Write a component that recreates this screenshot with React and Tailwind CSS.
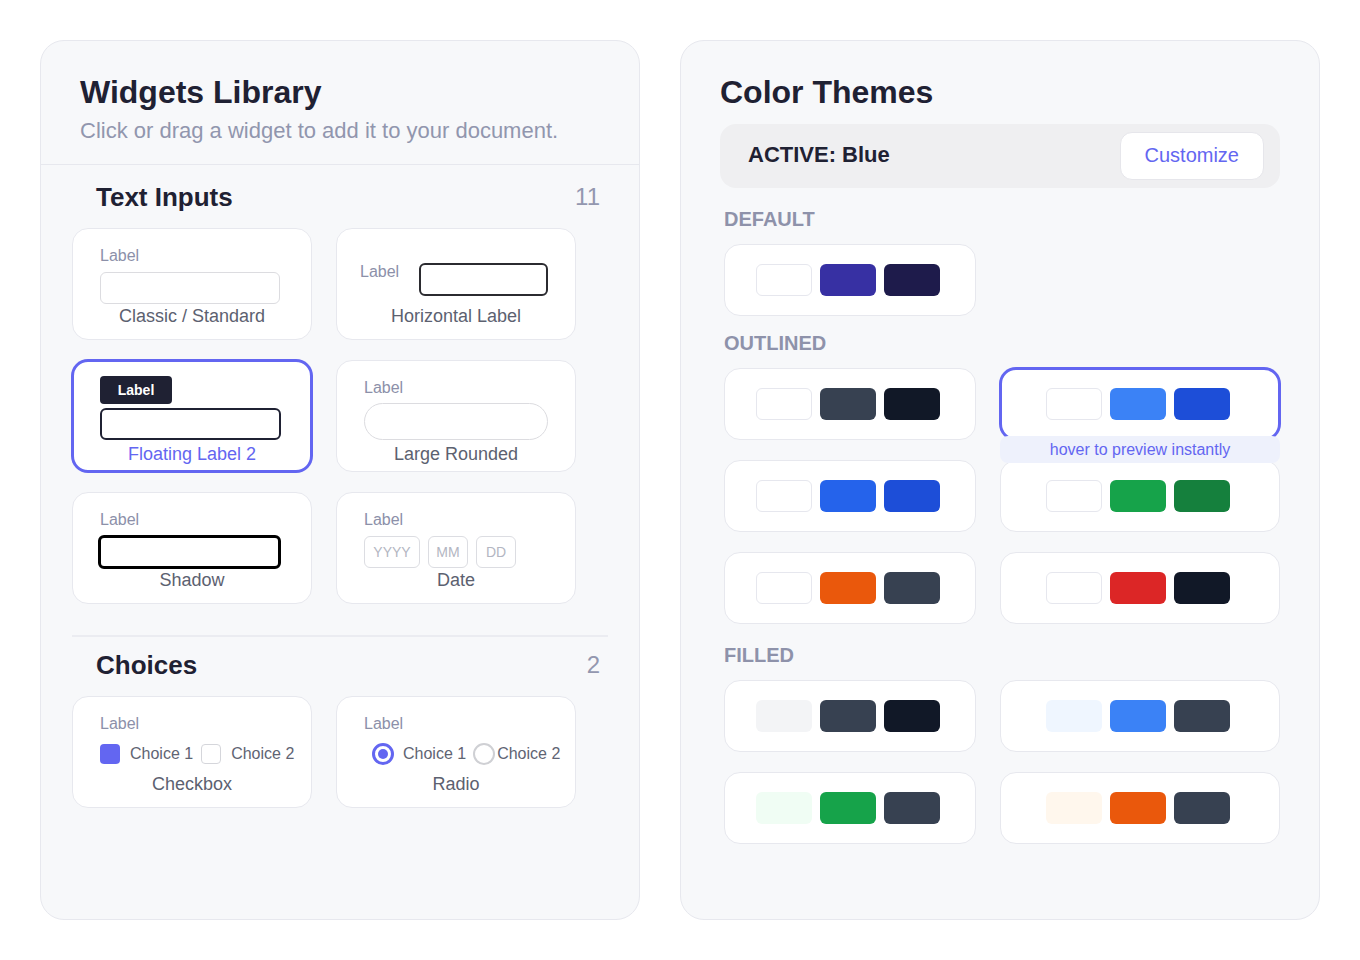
import React from 'react';

const muted = 'text-[#8c90a9]';

function Card({ selected, children, className = '' }) {
    return (
        <div
            className={`h-[112px] rounded-2xl bg-white flex flex-col ${
                selected ? 'border-2 border-[#6366f1] shadow-[0_0_0_1px_#6366f1]' : 'border border-[#e7e8ee]'
            } ${className}`}
        >
            {children}
        </div>
    );
}

function Caption({ children, blue }) {
    return (
        <div className={`text-center text-[18px] leading-6 ${blue ? 'text-[#6366f1]' : 'text-[#5c6170]'}`}>{children}</div>
    );
}

function Label({ children }) {
    return <div className={`text-[16px] leading-6 ${muted}`}>{children}</div>;
}

function Swatches({ colors, outlined }) {
    return (
        <div className="flex gap-2">
            {colors.map((c, i) => (
                <div
                    key={i}
                    className={`w-14 h-8 rounded-md ${c} ${i === 0 && outlined ? 'border border-[#e6e7ee]' : ''}`}
                />
            ))}
        </div>
    );
}

function ThemeCard({ colors, outlined, selected }) {
    return (
        <div
            className={`relative h-[72px] rounded-2xl bg-white flex items-center justify-center pr-1 ${
                selected ? 'border-2 border-[#6366f1] shadow-[0_0_0_1px_#6366f1]' : 'border border-[#e7e8ee]'
            }`}
        >
            <Swatches colors={colors} outlined={outlined} />
            {selected && (
                <div className="absolute z-10 left-[-2px] right-[-2px] top-[66px] h-[27px] rounded-lg bg-[#eef1fc] flex items-center justify-center text-[16px] text-[#6366f1]">
                    hover to preview instantly
                </div>
            )}
        </div>
    );
}

function SectionHead({ title, count }) {
    return (
        <div className="flex items-center justify-between pl-6 pr-2">
            <h2 className="text-[26px] leading-8 font-bold text-[#1f2133]">{title}</h2>
            <span className="text-[24px] leading-8 text-[#9397af]">{count}</span>
        </div>
    );
}

const outlined = [
    ['bg-white', 'bg-[#374151]', 'bg-[#111827]'],
    ['bg-white', 'bg-[#3b82f6]', 'bg-[#1d4ed8]'],
    ['bg-white', 'bg-[#2563eb]', 'bg-[#1d4ed8]'],
    ['bg-white', 'bg-[#16a34a]', 'bg-[#15803d]'],
    ['bg-white', 'bg-[#ea580c]', 'bg-[#374151]'],
    ['bg-white', 'bg-[#dc2626]', 'bg-[#111827]'],
];

const filled = [
    ['bg-[#f3f4f6]', 'bg-[#374151]', 'bg-[#111827]'],
    ['bg-[#eff6ff]', 'bg-[#3b82f6]', 'bg-[#374151]'],
    ['bg-[#f0fdf4]', 'bg-[#16a34a]', 'bg-[#374151]'],
    ['bg-[#fff7ed]', 'bg-[#ea580c]', 'bg-[#374151]'],
];

export default function App() {
    return (
        <div className="w-[1360px] h-[960px] bg-white p-10 flex gap-10 font-['Liberation_Sans',Arial,sans-serif]">
            {/* Widgets library */}
            <div className="w-[600px] h-[880px] rounded-3xl border border-[#e7e8ee] bg-[#f7f8fa] overflow-hidden">
                <div className="px-[39px] pt-[31px] pb-[19px] border-b border-[#e7e8ee]">
                    <h1 className="text-[32px] leading-10 font-bold text-[#1f2133]">Widgets Library</h1>
                    <p className="mt-[5px] text-[22px] leading-7 text-[#9196ae]">Click or drag a widget to add it to your document.</p>
                </div>

                <div className="pl-[31px] w-[567px]">
                    <div className="mt-4">
                        <SectionHead title="Text Inputs" count="11" />
                    </div>
                    <div className="mt-[15px] grid grid-cols-[240px_240px] gap-x-6 gap-y-5">
                        <Card className="pt-[15px] px-[27px]">
                            <div className="h-[60px]">
                                <Label>Label</Label>
                                <div className="mt-1 h-8 w-[180px] rounded-md border border-[#dcdce0]" />
                            </div>
                            <Caption>Classic / Standard</Caption>
                        </Card>
                        <Card className="pt-[15px] px-[23px]">
                            <div className="h-[60px] flex items-start">
                                <div className="mt-4"><Label>Label</Label></div>
                                <div className="ml-5 mt-[19px] h-[33px] w-[129px] rounded-md border-2 border-[#2b2b30]" />
                            </div>
                            <Caption>Horizontal Label</Caption>
                        </Card>
                        <Card selected className="pt-[14px] pl-[26px] pr-[26px]">
                            <div className="h-[66px]">
                                <div className="w-[72px] h-7 rounded bg-[#1f2133] flex items-center justify-center text-[14px] font-bold text-white">Label</div>
                                <div className="mt-1 h-8 w-[181px] rounded-md border-2 border-[#1f2133]" />
                            </div>
                            <Caption blue>Floating Label 2</Caption>
                        </Card>
                        <Card className="pt-[15px] px-[27px]">
                            <div className="h-[66px]">
                                <Label>Label</Label>
                                <div className="mt-[3px] h-[37px] w-[184px] rounded-full border border-[#dcdce0]" />
                            </div>
                            <Caption>Large Rounded</Caption>
                        </Card>
                        <Card className="pt-[15px] px-[27px]">
                            <div className="h-[60px]">
                                <Label>Label</Label>
                                <div className="mt-[3px] ml-[-2px] h-[34px] w-[183px] rounded-md border-[3px] border-black" />
                            </div>
                            <Caption>Shadow</Caption>
                        </Card>
                        <Card className="pt-[15px] px-[27px]">
                            <div className="h-[60px]">
                                <Label>Label</Label>
                                <div className="mt-1 flex gap-2 text-[14px] text-[#b3b6c2]">
                                    <div className="w-14 h-8 rounded-md border border-[#dcdde2] flex items-center justify-center">YYYY</div>
                                    <div className="w-10 h-8 rounded-md border border-[#dcdde2] flex items-center justify-center">MM</div>
                                    <div className="w-10 h-8 rounded-md border border-[#dcdde2] flex items-center justify-center">DD</div>
                                </div>
                            </div>
                            <Caption>Date</Caption>
                        </Card>
                    </div>

                    <div className="mt-[31px] h-[2px] bg-[#ebecf1]" />

                    <div className="mt-3">
                        <SectionHead title="Choices" count="2" />
                    </div>
                    <div className="mt-[15px] grid grid-cols-[240px_240px] gap-x-6">
                        <Card className="pt-[15px] px-[27px]">
                            <div className="h-[60px]">
                                <Label>Label</Label>
                                <div className="mt-1 h-7 flex items-center text-[16px] text-[#5f6473] whitespace-nowrap">
                                    <span className="w-5 h-5 shrink-0 rounded bg-[#6366f1]" />
                                    <span className="ml-2.5">Choice 1</span>
                                    <span className="ml-2 w-5 h-5 shrink-0 rounded border-[1.5px] border-[#d5d6db] bg-white" />
                                    <span className="ml-2.5">Choice 2</span>
                                </div>
                            </div>
                            <Caption>Checkbox</Caption>
                        </Card>
                        <Card className="pt-[15px] px-[27px]">
                            <div className="h-[60px]">
                                <Label>Label</Label>
                                <div className="mt-1 h-7 pl-2 flex items-center text-[16px] text-[#5f6473] whitespace-nowrap">
                                    <span className="w-[22px] h-[22px] shrink-0 rounded-full border-[3px] border-[#6366f1] flex items-center justify-center">
                                        <span className="w-2.5 h-2.5 rounded-full bg-[#6366f1]" />
                                    </span>
                                    <span className="ml-[9px]">Choice 1</span>
                                    <span className="ml-[7px] w-[22px] h-[22px] shrink-0 rounded-full border-2 border-[#cfd0d4]" />
                                    <span className="ml-[2px]">Choice 2</span>
                                </div>
                            </div>
                            <Caption>Radio</Caption>
                        </Card>
                    </div>
                </div>
            </div>

            {/* Color themes */}
            <div className="w-[640px] h-[880px] rounded-3xl border border-[#e7e8ee] bg-[#f7f8fa] px-[39px] pt-[31px]">
                <h1 className="text-[32px] leading-10 font-bold text-[#1f2133]">Color Themes</h1>
                <div className="mt-3 h-16 rounded-2xl bg-[#efeff1] flex items-center justify-between pl-7 pr-4">
                    <span className="mb-1 text-[22px] font-bold text-[#1f2133]">ACTIVE: Blue</span>
                    <button className="h-12 px-6 rounded-xl bg-white border border-[#e6e6eb] text-[20px] leading-6 pb-0.5 text-[#6366f1]">Customize</button>
                </div>

                <div className="pl-1">
                    <div className="mt-[19px] text-[20px] leading-6 font-bold text-[#8e92aa]">DEFAULT</div>
                    <div className="mt-[13px] grid grid-cols-[252px_280px] gap-x-6">
                        <ThemeCard outlined colors={['bg-white', 'bg-[#3730a3]', 'bg-[#1e1b4b]']} />
                    </div>

                    <div className="mt-[15px] text-[20px] leading-6 font-bold text-[#8e92aa]">OUTLINED</div>
                    <div className="mt-[13px] grid grid-cols-[252px_280px] gap-x-6 gap-y-5">
                        {outlined.map((c, i) => (
                            <ThemeCard key={i} outlined colors={c} selected={i === 1} />
                        ))}
                    </div>

                    <div className="mt-[19px] text-[20px] leading-6 font-bold text-[#8e92aa]">FILLED</div>
                    <div className="mt-[13px] grid grid-cols-[252px_280px] gap-x-6 gap-y-5">
                        {filled.map((c, i) => (
                            <ThemeCard key={i} colors={c} />
                        ))}
                    </div>
                </div>
            </div>
        </div>
    );
}
